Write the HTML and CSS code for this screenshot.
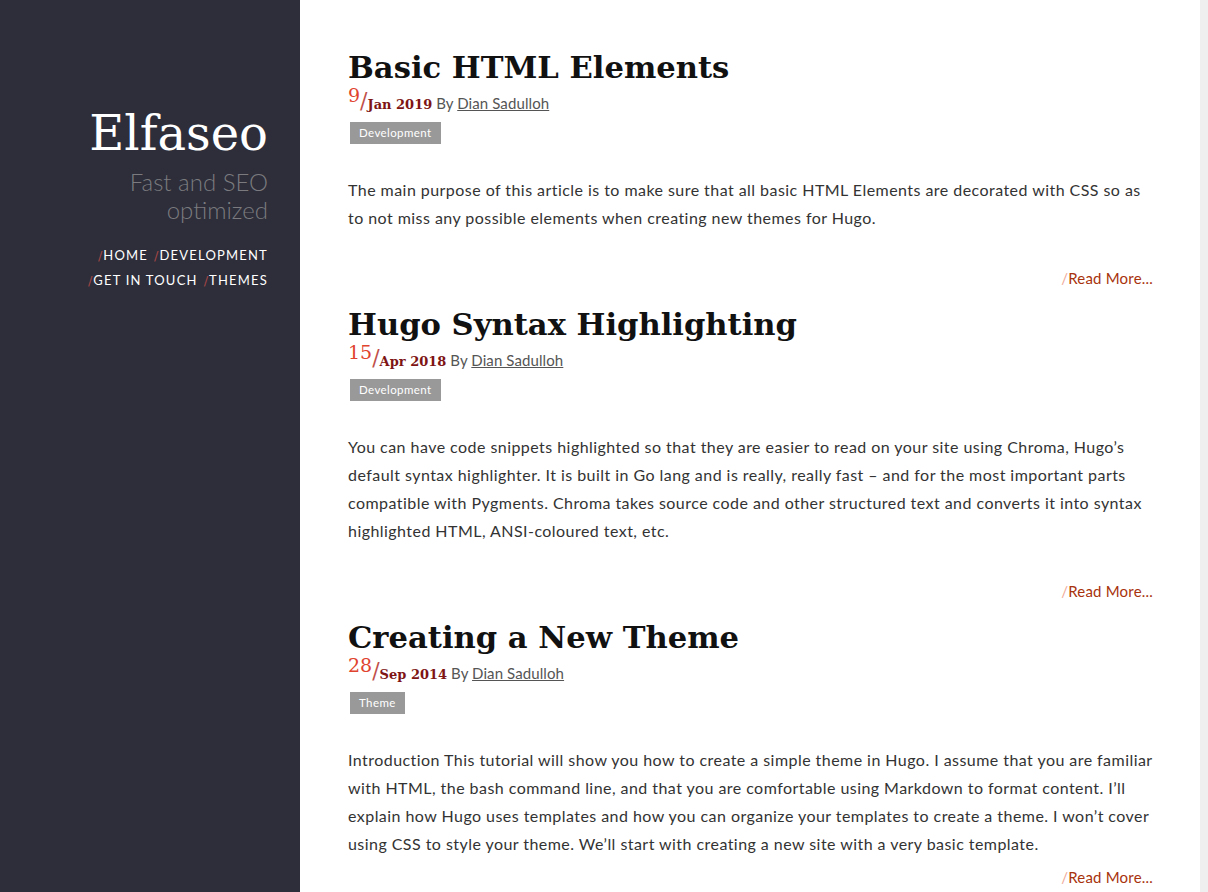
FILE: index.html
```html
<!DOCTYPE html>
<html lang="en">
<head>
<meta charset="utf-8">
<title>Elfaseo</title>
<link rel="stylesheet" href="styles.css">
</head>
<body>
<div class="page">
  <aside class="sidebar">
    <h1 class="brand">Elfaseo</h1>
    <p class="tagline">Fast and SEO optimized</p>
    <nav class="nav">
      <div class="nav-row"><a href="#"><span class="sl">/</span>Home</a><a href="#"><span class="sl">/</span>Development</a></div>
      <div class="nav-row"><a href="#"><span class="sl">/</span>Get in Touch</a><a href="#"><span class="sl">/</span>Themes</a></div>
    </nav>
  </aside>
  <main class="main">
    <article class="post">
      <h2 class="post-title">Basic HTML Elements</h2>
      <div class="meta"><span class="day">9</span><span class="dslash">/</span><span class="month">Jan 2019</span> By <a class="author" href="#">Dian Sadulloh</a></div>
      <div class="tags"><a class="tag" href="#">Development</a></div>
      <p class="summary gap">The main purpose of this article is to make sure that all basic HTML Elements are decorated with CSS so as to not miss any possible elements when creating new themes for Hugo.</p>
      <div class="more"><a href="#"><span class="rs">/</span>Read More...</a></div>
    </article>
    <article class="post">
      <h2 class="post-title">Hugo Syntax Highlighting</h2>
      <div class="meta"><span class="day">15</span><span class="dslash">/</span><span class="month">Apr 2018</span> By <a class="author" href="#">Dian Sadulloh</a></div>
      <div class="tags"><a class="tag" href="#">Development</a></div>
      <p class="summary gap">You can have code snippets highlighted so that they are easier to read on your site using Chroma, Hugo’s default syntax highlighter. It is built in Go lang and is really, really fast – and for the most important parts compatible with Pygments. Chroma takes source code and other structured text and converts it into syntax highlighted HTML, ANSI-coloured text, etc.</p>
      <div class="more"><a href="#"><span class="rs">/</span>Read More...</a></div>
    </article>
    <article class="post">
      <h2 class="post-title">Creating a New Theme</h2>
      <div class="meta"><span class="day">28</span><span class="dslash">/</span><span class="month">Sep 2014</span> By <a class="author" href="#">Dian Sadulloh</a></div>
      <div class="tags"><a class="tag" href="#">Theme</a></div>
      <p class="summary">Introduction This tutorial will show you how to create a simple theme in Hugo. I assume that you are familiar with HTML, the bash command line, and that you are comfortable using Markdown to format content. I’ll explain how Hugo uses templates and how you can organize your templates to create a theme. I won’t cover using CSS to style your theme. We’ll start with creating a new site with a very basic template.</p>
      <div class="more"><a href="#"><span class="rs">/</span>Read More...</a></div>
    </article>
  </main>
  <div class="rail"></div>
</div>
</body>
</html>
```

FILE: styles.css
```css
* { box-sizing: border-box; }
html, body { margin: 0; padding: 0; height: 100%; overflow: hidden; }
body {
  font-family: Lato, "Open Sans", sans-serif;
  color: #333;
  background: #fff;
}
.page {
  display: flex;
  height: 892px;
}
.sidebar {
  width: 300px;
  flex: none;
  background: #2d2e3a;
  padding: 98px 32px 0 0;
  text-align: right;
}
.brand {
  margin: 0;
  font-family: "DejaVu Serif", serif;
  font-weight: normal;
  font-size: 48px;
  line-height: 70px;
  color: #fff;
}
.tagline {
  margin: 0 0 0 auto;
  width: 150px;
  font-family: Lato, sans-serif;
  font-weight: 300;
  font-size: 24px;
  line-height: 28px;
  color: #7b7b7f;
}
.nav {
  margin-top: 19px;
}
.nav-row {
  display: flex;
  justify-content: flex-end;
  gap: 6px;
  line-height: 24px;
}
.nav a {
  color: #fff;
  text-decoration: none;
  text-transform: uppercase;
  font-size: 13px;
  letter-spacing: 1.2px;
}
.nav .sl {
  color: #a34545;
  font-family: "DejaVu Sans", sans-serif;
  margin-right: 1px;
  letter-spacing: 0;
}

.main {
  flex: 1;
  padding: 47px 47px 0 48px;
}
.rail {
  width: 8px;
  flex: none;
  background: #efefef;
}
.post-title {
  margin: 0;
  font-family: "DejaVu Serif", serif;
  font-weight: bold;
  font-size: 30.6px;
  line-height: 40px;
  color: #111;
}
.meta {
  margin-top: -1px;
  height: 26px;
  line-height: 26px;
  font-size: 15px;
  letter-spacing: 0.1px;
  color: #555;
}
.day {
  font-family: "DejaVu Serif", serif;
  font-size: 19px;
  color: #e0432e;
  vertical-align: 7px;
  line-height: 1;
  letter-spacing: 0;
}
.dslash {
  font-family: "DejaVu Serif", serif;
  font-size: 22px;
  color: #c0504a;
  line-height: 1;
  vertical-align: 1px;
  letter-spacing: 0;
}
.month {
  font-family: "DejaVu Serif", serif;
  font-size: 13px;
  color: #7e1414;
  font-weight: 600;
  letter-spacing: 0;
}
.author {
  color: #555;
  text-decoration: underline;
}
.tags {
  margin-top: 10px;
  padding-left: 2px;
  display: flex;
}
.tag {
  display: block;
  background: #999;
  color: #fff;
  font-size: 11.5px;
  letter-spacing: 0.4px;
  line-height: 22px;
  padding: 0 9px;
  text-decoration: none;
}
.summary {
  margin: 32px 0 5px;
  font-size: 16px;
  letter-spacing: 0.45px;
  line-height: 28px;
  color: #333;
}
.summary.gap { margin-bottom: 32px; }
.more {
  text-align: right;
  line-height: 28px;
  font-size: 15px;
  letter-spacing: 0.2px;
  margin-bottom: 12px;
}
.more a {
  color: #a8330c;
  text-decoration: none;
}
.more .rs { color: #f0a898; }
```
